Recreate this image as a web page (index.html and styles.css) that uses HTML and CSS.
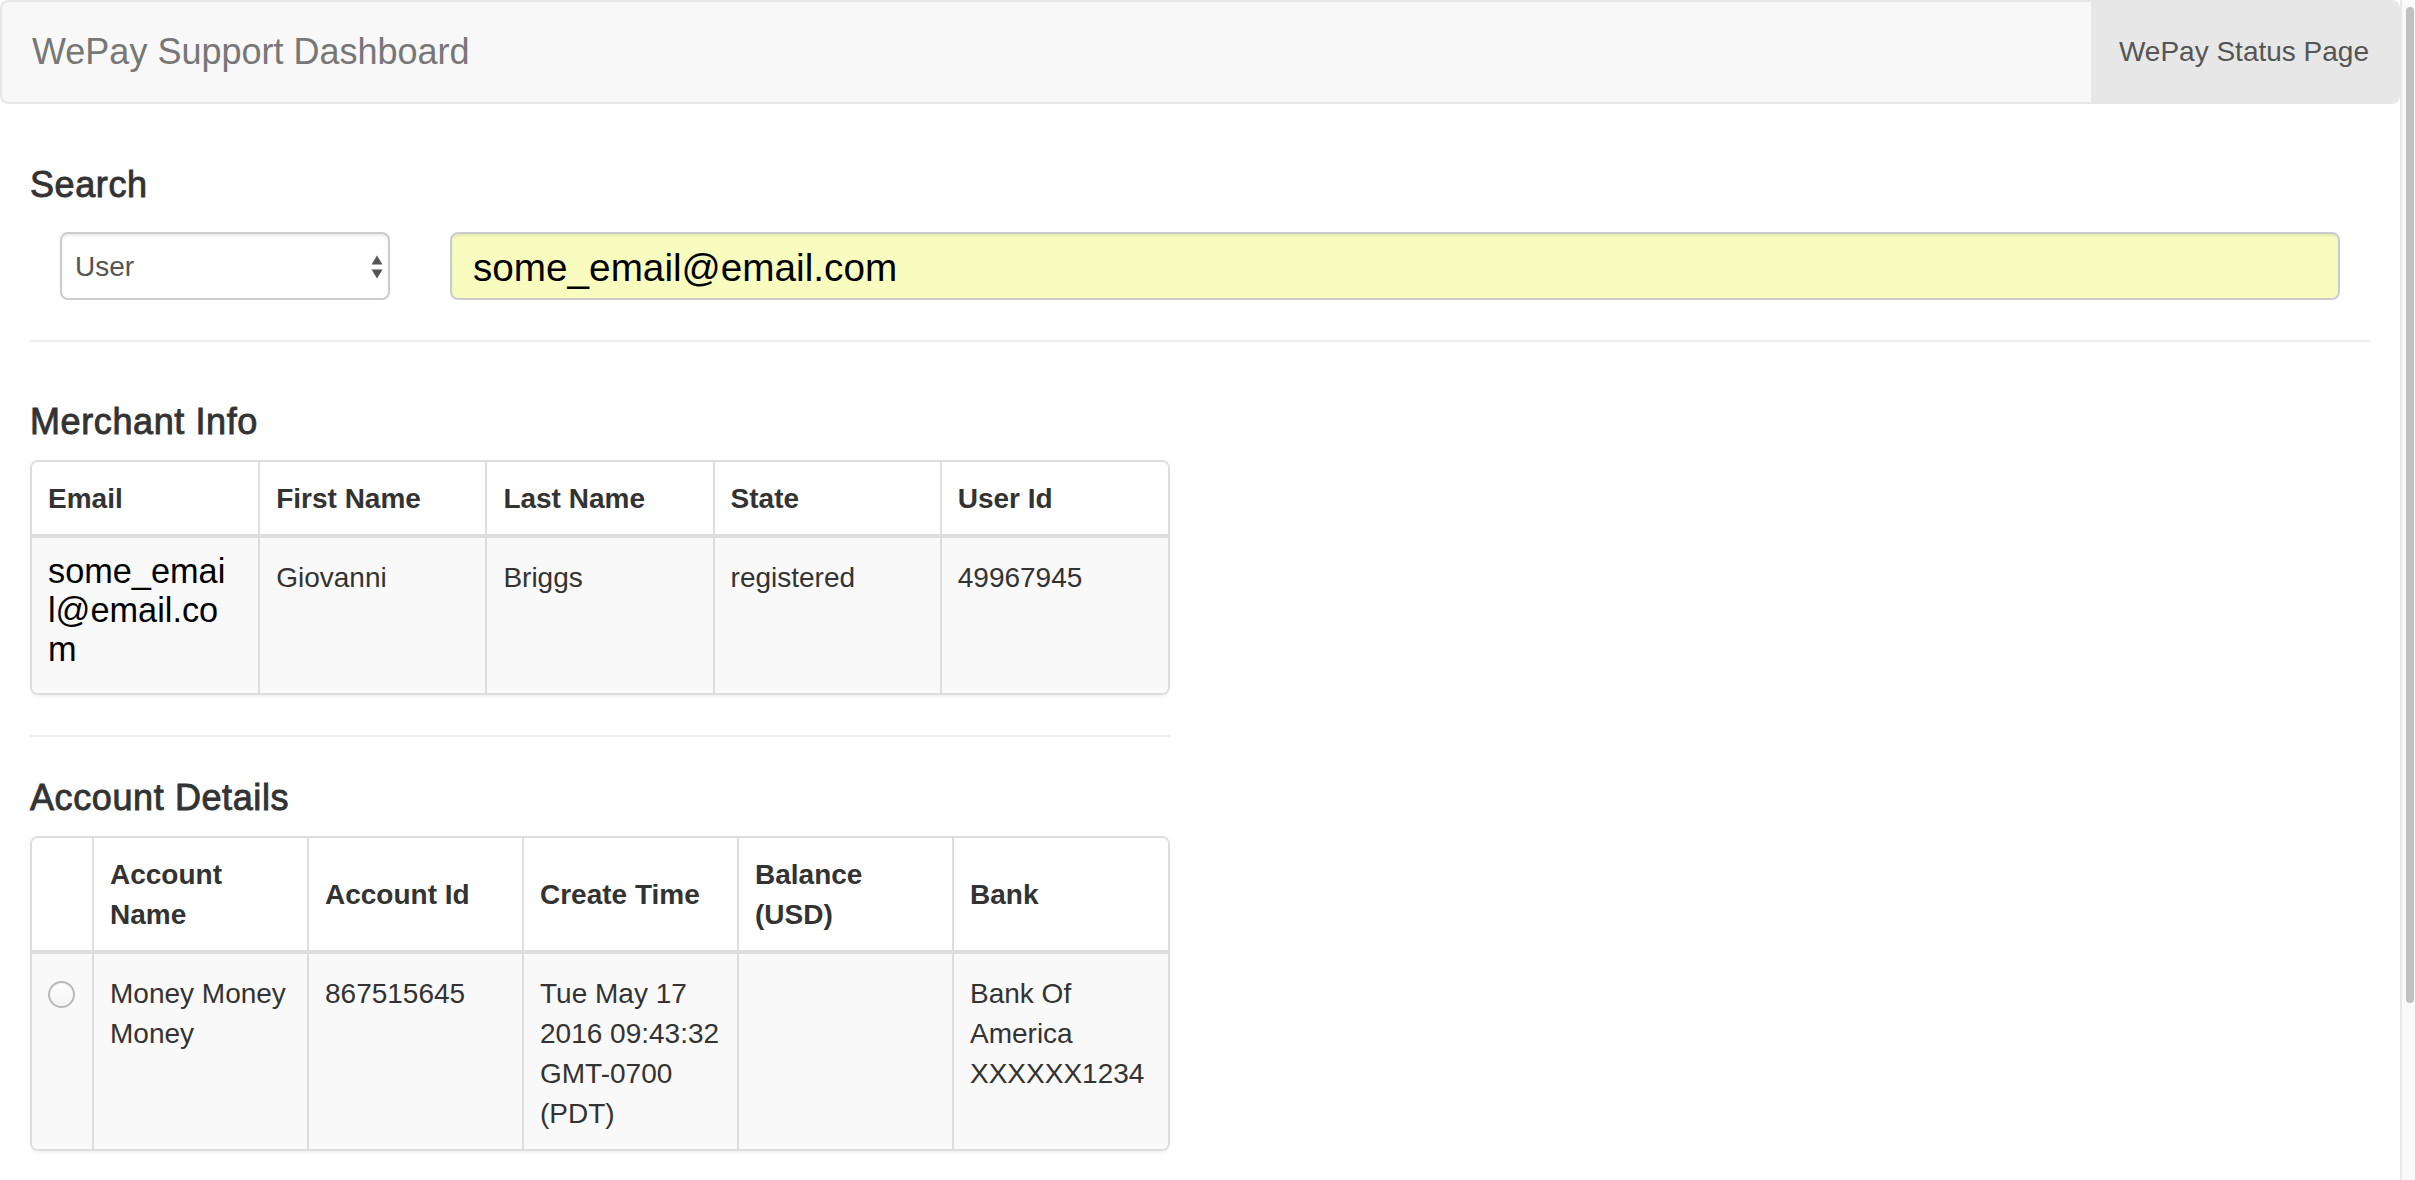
FILE: index.html
```html
<!DOCTYPE html>
<html lang="en">
<head>
<meta charset="utf-8">
<title>WePay Support Dashboard</title>
<link rel="stylesheet" href="styles.css">
</head>
<body>
<div class="page">
  <nav class="navbar">
    <div class="brand">WePay Support Dashboard</div>
    <div class="nav-link">WePay Status Page</div>
  </nav>
  <div class="container">
    <h4 class="title title-search">Search</h4>
    <div class="search-row">
      <div class="select">
        <span>User</span>
        <svg class="arrows" width="14" height="30" viewBox="0 0 14 30"><polygon points="1.5,12.5 7,3.5 12.5,12.5" fill="#555"/><polygon points="1.5,17.5 7,26.5 12.5,17.5" fill="#555"/></svg>
      </div>
      <div class="input">some_email@email.com</div>
    </div>
    <hr class="rule">
    <div class="half">
      <h4 class="title title-merchant">Merchant Info</h4>
      <div class="panel panel-merchant">
        <table>
          <thead>
            <tr><th>Email</th><th>First Name</th><th>Last Name</th><th>State</th><th>User Id</th></tr>
          </thead>
          <tbody>
            <tr>
              <td><span class="email">some_emai<br>l@email.co<br>m</span></td>
              <td>Giovanni</td>
              <td>Briggs</td>
              <td>registered</td>
              <td>49967945</td>
            </tr>
          </tbody>
        </table>
      </div>
      <hr class="rule">
      <h4 class="title title-account">Account Details</h4>
      <div class="panel panel-account">
        <table>
          <colgroup><col class="c-radio"><col><col><col><col><col></colgroup>
          <thead>
            <tr><th></th><th>Account Name</th><th>Account Id</th><th>Create Time</th><th>Balance (USD)</th><th>Bank</th></tr>
          </thead>
          <tbody>
            <tr>
              <td><span class="radio"></span></td>
              <td>Money Money Money</td>
              <td>867515645</td>
              <td>Tue May 17 2016 09:43:32 GMT-0700 (PDT)</td>
              <td></td>
              <td>Bank Of America XXXXXX1234</td>
            </tr>
          </tbody>
        </table>
      </div>
    </div>
  </div>
</div>
<div class="scrollbar"><div class="thumb"></div></div>
</body>
</html>
```

FILE: styles.css
```css
html, body {
  margin: 0;
  padding: 0;
}
body {
  height: 1180px;
  overflow: hidden;
  display: flex;
  font-family: "Liberation Sans", Arial, sans-serif;
  color: #333;
  background: #fff;
}
.page {
  width: 2400px;
  flex: none;
}
.navbar {
  height: 104px;
  box-sizing: border-box;
  border: 2px solid #e7e7e7;
  border-radius: 8px;
  background: #f8f8f8;
  display: flex;
  justify-content: space-between;
  align-items: stretch;
  overflow: hidden;
}
.brand {
  display: flex;
  align-items: center;
  padding-left: 30px;
  font-size: 36px;
  color: #777;
}
.nav-link {
  display: flex;
  align-items: center;
  padding: 0 29px 0 28px;
  background: #e7e7e7;
  font-size: 28px;
  color: #555;
}
.container {
  padding: 0 30px;
}
.title {
  margin: 0;
  font-size: 36px;
  font-weight: normal;
  line-height: 39.6px;
  letter-spacing: 0.6px;
  color: #333;
  -webkit-text-stroke: 0.9px #333;
}
.title-search {
  margin-top: 61px;
}
.search-row {
  display: flex;
  gap: 60px;
  margin-top: 27px;
  padding: 0 30px;
}
.select {
  width: 330px;
  height: 68px;
  box-sizing: border-box;
  flex: none;
  border: 2px solid #ccc;
  border-radius: 8px;
  background: #fff;
  display: flex;
  align-items: center;
  justify-content: space-between;
  padding: 2px 4px 0 13px;
  font-size: 28px;
  color: #555;
  box-shadow: inset 0 2px 2px rgba(0, 0, 0, 0.075);
}
.arrows {
  display: block;
}
.input {
  flex: 1;
  height: 68px;
  box-sizing: border-box;
  border: 2px solid #ccc;
  border-radius: 8px;
  background: #f8fcbe;
  padding: 4px 21px 0;
  display: flex;
  align-items: center;
  font-size: 38.7px;
  color: #000;
  box-shadow: inset 0 2px 2px rgba(0, 0, 0, 0.075);
}
.rule {
  border: 0;
  border-top: 2px solid #eee;
  height: 0;
  margin: 40px 0 0;
}
.half {
  width: 1140px;
}
.title-merchant {
  margin-top: 60px;
}
.title-account {
  margin-top: 41px;
}
.panel {
  border: 2px solid #ddd;
  border-radius: 8px;
  overflow: hidden;
  box-shadow: 0 2px 2px rgba(0, 0, 0, 0.05);
}
.panel-merchant {
  margin-top: 19px;
}
.panel-account {
  margin-top: 18px;
}
table {
  width: 100%;
  border-collapse: collapse;
  table-layout: fixed;
  font-size: 28px;
  line-height: 40px;
}
th, td {
  text-align: left;
  border-left: 2px solid #ddd;
}
th:first-child, td:first-child {
  border-left: 0;
}
th {
  padding: 17px 16px 15px;
  font-weight: bold;
  vertical-align: middle;
  border-bottom: 4px solid #ddd;
  background: #fff;
}
td {
  padding: 20px 16px 15px;
  vertical-align: top;
  background: #f9f9f9;
}
.c-radio {
  width: 61px;
}
.email {
  display: block;
  font-size: 34.3px;
  line-height: 39px;
  margin: -6.5px 0 9.5px;
  color: #000;
}
.radio {
  display: block;
  width: 27px;
  height: 27px;
  margin-top: 7px;
  box-sizing: border-box;
  border-radius: 50%;
  border: 2px solid #b9b9b9;
  background: linear-gradient(#ffffff, #f3f3f3);
  box-shadow: inset 0 1px 1px rgba(0, 0, 0, 0.06);
}
.scrollbar {
  width: 15px;
  flex: none;
  box-sizing: border-box;
  border-left: 2px solid #e8e8e8;
  background: #fafafa;
  padding: 7px 1px 0 4px;
}
.thumb {
  height: 996px;
  background: #c1c1c1;
  border-radius: 4px;
}
```
